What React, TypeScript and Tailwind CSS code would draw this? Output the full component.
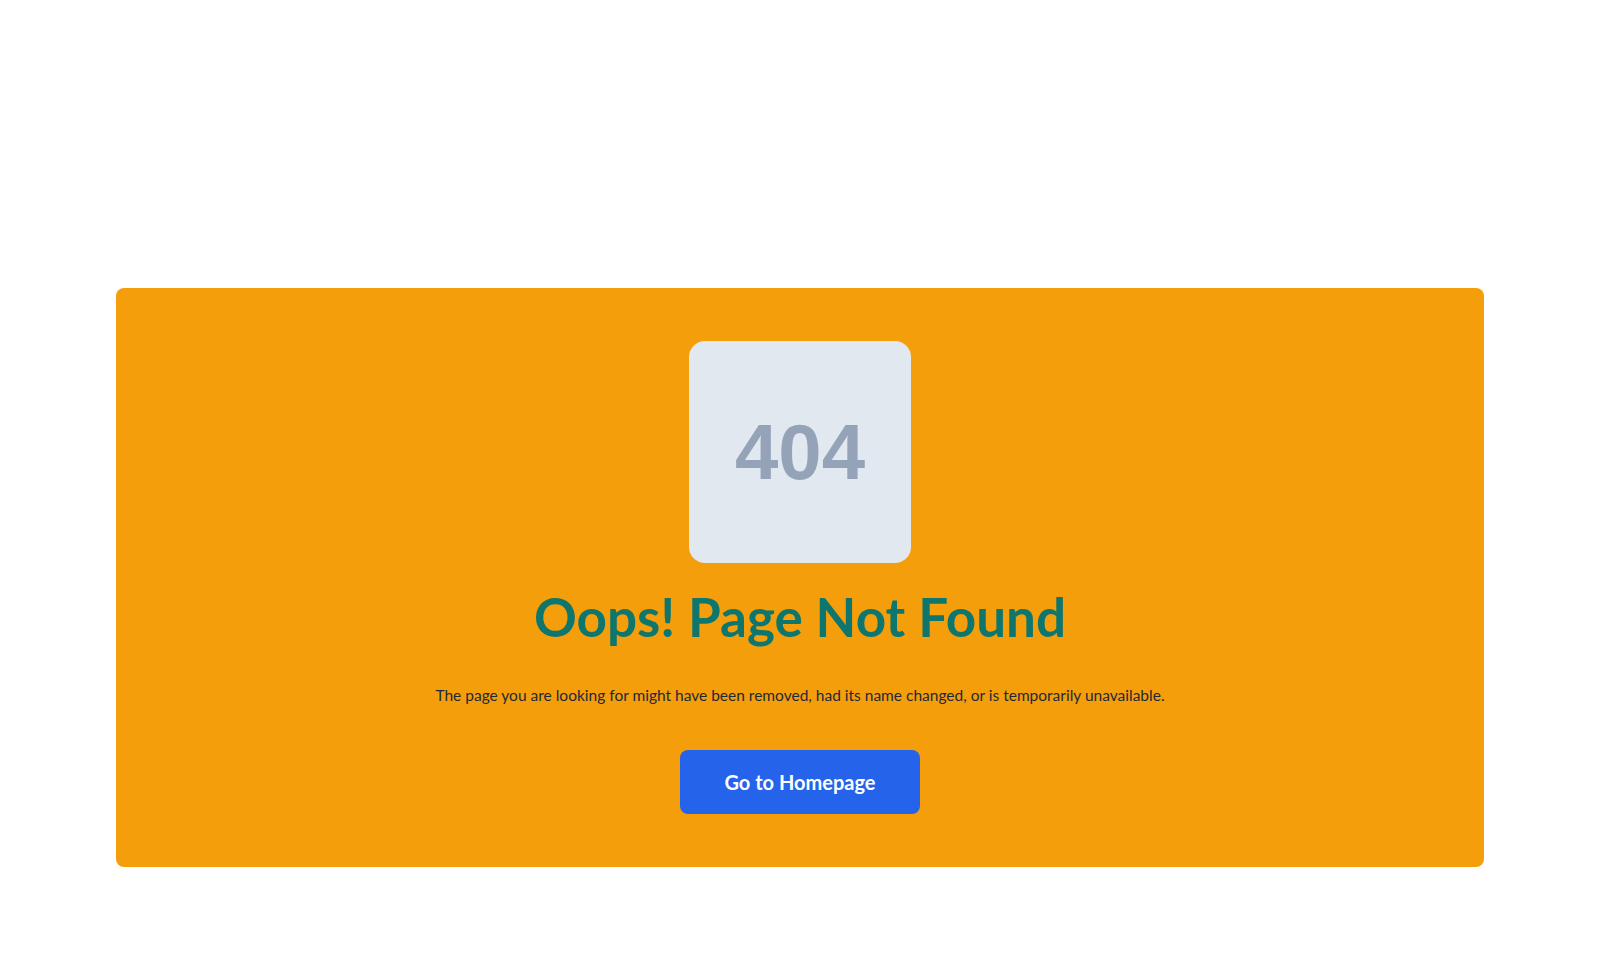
export default function App() {
  return (
    <div className="min-h-screen bg-white px-[116px] pt-[288px] font-['Lato',sans-serif]">
      <div className="flex flex-col items-center rounded-lg bg-[#f59e0b] pt-[53px] pb-[53px]">
        {/* 404 tile */}
        <div className="flex h-[222px] w-[222px] items-center justify-center rounded-2xl bg-[#e2e8f0]">
          <span className="font-['Liberation_Sans',Arial,sans-serif] text-[78px] font-bold leading-none text-[#94a3b8]">
            404
          </span>
        </div>

        <h1 className="mt-[22px] text-[53px] font-bold leading-[1.2] text-[#0f766e]">
          Oops! Page Not Found
        </h1>

        <p className="mt-[35px] text-[15.5px] leading-normal text-[#1f2937]">
          The page you are looking for might have been removed, had its name changed, or is temporarily unavailable.
        </p>

        <button className="mt-[43px] h-16 w-[240px] rounded-lg bg-[#2563eb] text-xl font-bold text-white">
          Go to Homepage
        </button>
      </div>
    </div>
  )
}
